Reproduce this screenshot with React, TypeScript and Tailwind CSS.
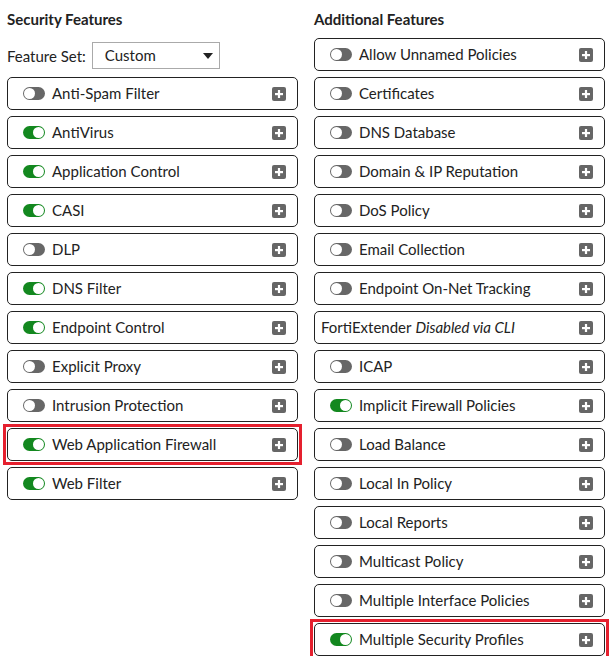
import React from 'react';

type Feature = { label: string; on?: boolean; highlight?: boolean; note?: string; noToggle?: boolean };

const SECURITY: Feature[] = [
  { label: 'Anti-Spam Filter' },
  { label: 'AntiVirus', on: true },
  { label: 'Application Control', on: true },
  { label: 'CASI', on: true },
  { label: 'DLP' },
  { label: 'DNS Filter', on: true },
  { label: 'Endpoint Control', on: true },
  { label: 'Explicit Proxy' },
  { label: 'Intrusion Protection' },
  { label: 'Web Application Firewall', on: true, highlight: true },
  { label: 'Web Filter', on: true },
];

const ADDITIONAL: Feature[] = [
  { label: 'Allow Unnamed Policies' },
  { label: 'Certificates' },
  { label: 'DNS Database' },
  { label: 'Domain & IP Reputation' },
  { label: 'DoS Policy' },
  { label: 'Email Collection' },
  { label: 'Endpoint On-Net Tracking' },
  { label: 'FortiExtender', note: 'Disabled via CLI', noToggle: true },
  { label: 'ICAP' },
  { label: 'Implicit Firewall Policies', on: true },
  { label: 'Load Balance' },
  { label: 'Local In Policy' },
  { label: 'Local Reports' },
  { label: 'Multicast Policy' },
  { label: 'Multiple Interface Policies' },
  { label: 'Multiple Security Profiles', on: true, highlight: true },
];

const Toggle = ({ on }: { on?: boolean }) => (
  <span
    className={`relative inline-flex h-[13px] w-[22px] shrink-0 rounded-full ${
      on ? 'bg-[#13881f] justify-end' : 'bg-[#676767] justify-start'
    } items-center px-[1px]`}
  >
    <span className="block h-[11px] w-[11px] rounded-full bg-white" />
  </span>
);

const PlusBox = () => (
  <svg width="14" height="14" viewBox="0 0 14 14" className="shrink-0">
    <rect x="0" y="0" width="14" height="14" rx="2" fill="#666" />
    <rect x="3" y="6" width="8" height="2.2" fill="#fff" />
    <rect x="5.9" y="3" width="2.2" height="8" fill="#fff" />
  </svg>
);

const Card = ({ f }: { f: Feature }) => (
  <div
    className={`flex h-[33px] items-center rounded-[5px] border border-[#222] bg-white pr-[11px] ${
      f.noToggle ? 'pl-[6px]' : 'pl-[15px]'
    }`}
  >
    {!f.noToggle && <Toggle on={f.on} />}
    <span className={`flex-1 text-[15px] text-[#222] ${f.noToggle ? '' : 'ml-[7px]'}`}>
      {f.label}
      {f.note && <i className="ml-[4px]">{f.note}</i>}
    </span>
    <PlusBox />
  </div>
);

// highlighted rows get a square red frame that sits outside the card
const Row = ({ f }: { f: Feature }) =>
  f.highlight ? (
    <div className="-m-[4px] border-[3px] border-[#e5202e] p-[1px]">
      <Card f={f} />
    </div>
  ) : (
    <Card f={f} />
  );

export default function App() {
  return (
    <div
      className="flex gap-[16px] bg-white pl-[7px] pt-[8px] text-[#222]"
      style={{ fontFamily: 'Lato, "Noto Sans", sans-serif' }}
    >
      <div className="flex w-[291px] flex-col">
        <div className="mb-[8px] h-[22px] text-[15px] font-bold leading-[22px]">Security Features</div>
        <div className="flex h-[39px] items-start pt-[4px]">
          <span className="mr-[6px] mt-[3px] text-[15px]">Feature Set:</span>
          <div className="flex h-[27px] w-[128px] items-center justify-between border border-[#aaa] pl-[12px] pr-[6px] text-[15px]">
            <span>Custom</span>
            <svg width="10" height="6" viewBox="0 0 10 6">
              <path d="M0 0 L10 0 L5 6 Z" fill="#222" />
            </svg>
          </div>
        </div>
        <div className="flex flex-col gap-[6px]">
          {SECURITY.map(f => (
            <Row key={f.label} f={f} />
          ))}
        </div>
      </div>
      <div className="flex w-[291px] flex-col">
        <div className="mb-[8px] h-[22px] text-[15px] font-bold leading-[22px]">Additional Features</div>
        <div className="flex flex-col gap-[6px]">
          {ADDITIONAL.map(f => (
            <Row key={f.label} f={f} />
          ))}
        </div>
      </div>
    </div>
  );
}
